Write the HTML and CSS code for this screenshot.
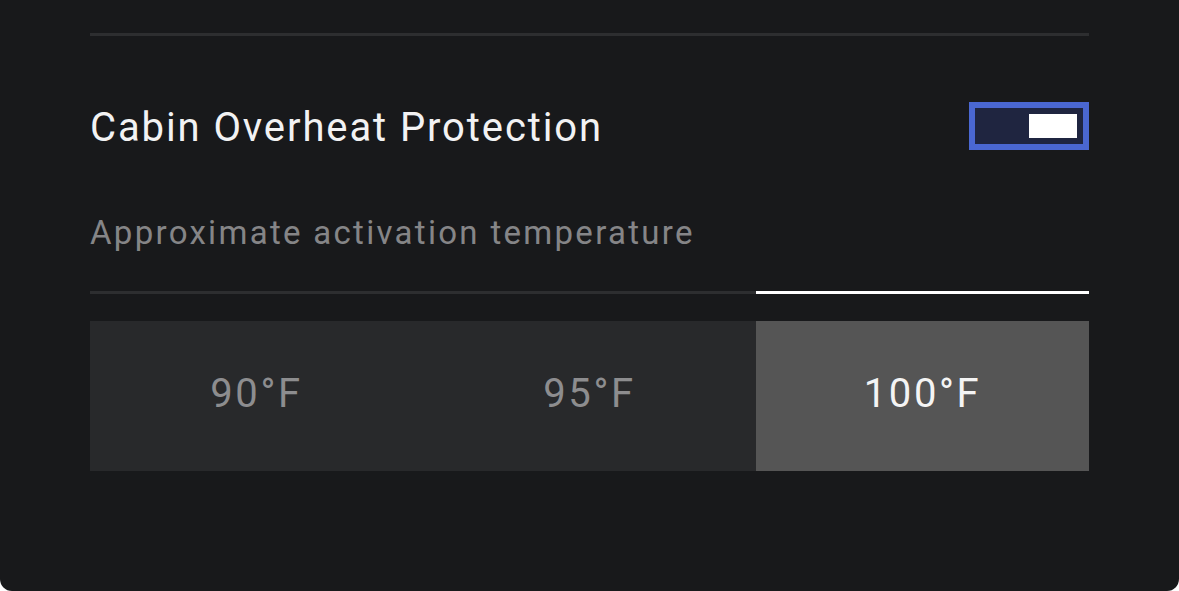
FILE: index.html
```html
<!DOCTYPE html>
<html lang="en">
<head>
<meta charset="utf-8">
<title>Cabin Overheat Protection</title>
<link rel="stylesheet" href="styles.css">
</head>
<body>
<section class="panel">
  <div class="rule"></div>

  <div class="setting-row">
    <span class="setting-title">Cabin Overheat Protection</span>
    <button class="toggle is-on" aria-pressed="true"><span class="toggle-knob"></span></button>
  </div>

  <p class="setting-caption">Approximate activation temperature</p>

  <div class="seg-track">
    <span class="seg-track-rest"></span>
    <span class="seg-track-active"></span>
  </div>

  <div class="segments">
    <div class="segment">90°F</div>
    <div class="segment">95°F</div>
    <div class="segment is-selected">100°F</div>
  </div>
</section>
</body>
</html>
```

FILE: styles.css
```css
html, body {
  margin: 0;
  padding: 0;
  background: #ffffff;
}

.panel {
  box-sizing: border-box;
  width: 1179px;
  height: 591px;
  padding: 33px 90px 0;
  background: #18191b;
  border-radius: 0 0 12px 12px;
  font-family: Roboto, "Liberation Sans", sans-serif;
  color: #f2f2f3;
}

.rule {
  height: 3px;
  background: #2d2e30;
}

.setting-row {
  display: flex;
  align-items: center;
  justify-content: space-between;
  margin-top: 66px;
  height: 48px;
}

.setting-title {
  font-size: 40px;
  line-height: 48px;
  letter-spacing: 1.9px;
  color: #f2f2f3;
  padding-top: 3px;
}

.toggle {
  box-sizing: border-box;
  width: 120px;
  height: 48px;
  padding: 6px;
  margin: 0;
  border: 6px solid #4a67d1;
  background: #1f2540;
  display: flex;
  justify-content: flex-end;
  align-items: center;
}

.toggle-knob {
  width: 48px;
  height: 24px;
  background: #ffffff;
}

.setting-caption {
  margin: 63px 0 0;
  font-size: 33px;
  line-height: 40px;
  letter-spacing: 2.3px;
  color: #858587;
}

.seg-track {
  display: flex;
  height: 3px;
  margin-top: 38px;
}

.seg-track-rest {
  flex: 2;
  background: #2d2e30;
}

.seg-track-active {
  flex: 1;
  background: #ffffff;
}

.segments {
  display: flex;
  margin-top: 27px;
  height: 150px;
}

.segment {
  flex: 1;
  display: flex;
  align-items: center;
  justify-content: center;
  background: #28292b;
  font-size: 40px;
  letter-spacing: 2.6px;
  color: #8d8d8f;
  padding-bottom: 6px;
  box-sizing: border-box;
}

.segment.is-selected {
  background: #555555;
  color: #f4f4f4;
}
```
